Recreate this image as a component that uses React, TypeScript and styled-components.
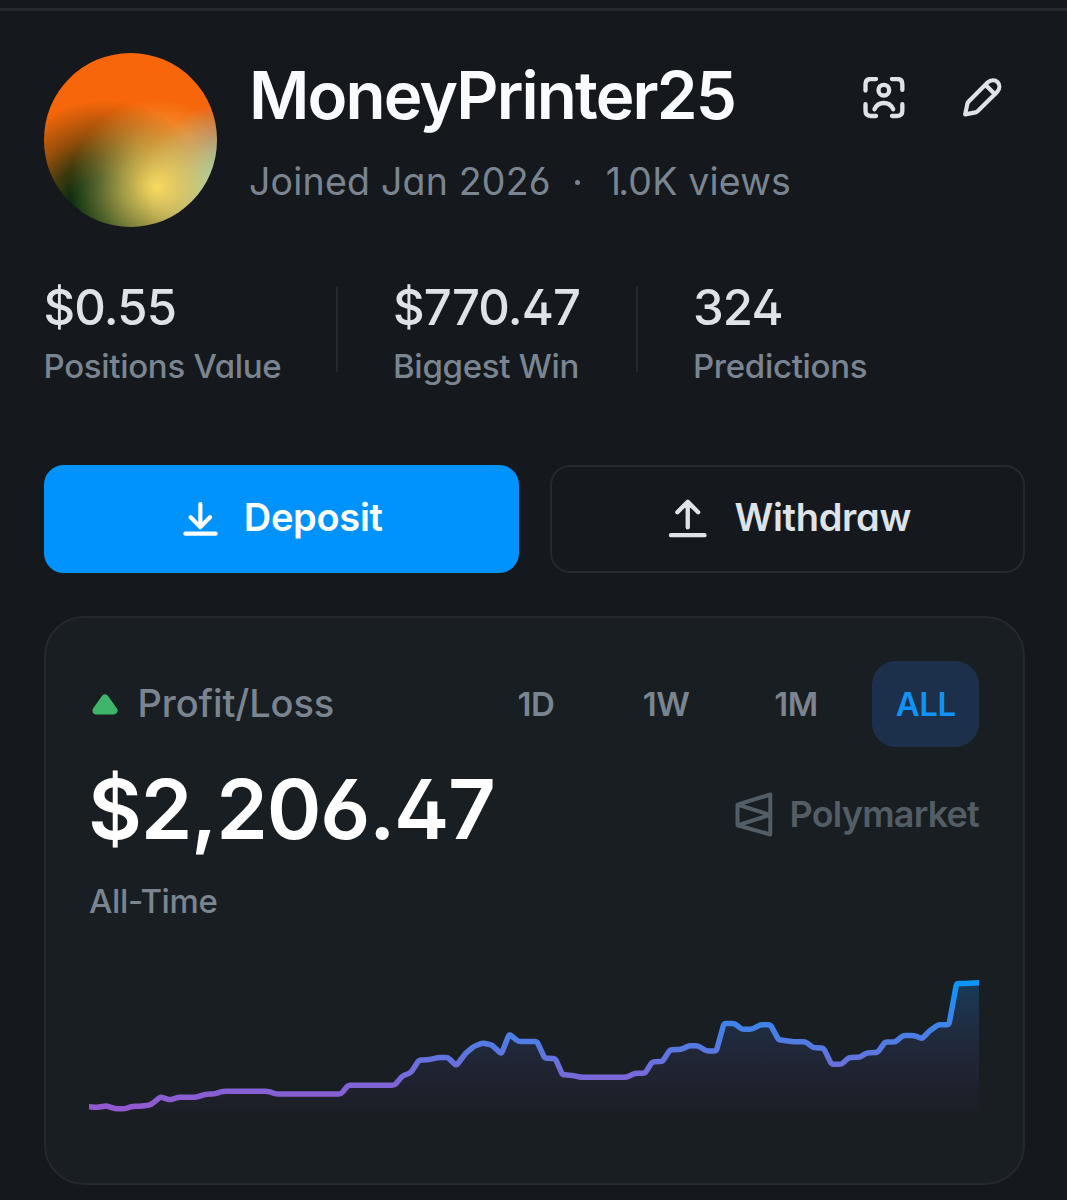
import React from "react";
import styled, { createGlobalStyle, css } from "styled-components";

const GlobalStyle = createGlobalStyle`
  *, *::before, *::after { box-sizing: border-box; }
  body {
    margin: 0;
    background: #15191d;
    font-family: Inter, "Liberation Sans", sans-serif;
    font-feature-settings: "cv11", "cv02", "cv03", "cv04";
    overflow: hidden;
  }
`;

const color = {
  line: "#25292d",
  muted: "#7a8591",
  text: "#dee3e9",
  blue: "#0093fd",
};

const Page = styled.main`
  display: flex;
  flex-direction: column;
  width: 1067px;
  height: 1200px;
  padding: 7.5px 42.5px 0 43.5px;
  overflow: hidden;
`;

const TopRule = styled.hr`
  width: 1067px;
  height: 3px;
  flex: none;
  margin: 0 0 0 -43.5px;
  border: 0;
  background: #25292d;
`;

const Header = styled.header`
  display: flex;
  align-items: flex-start;
  margin-top: 42px;
  height: 174px;
`;

const Avatar = styled.div`
  width: 173.5px;
  height: 174px;
  flex: none;
  border-radius: 50%;
  background:
    radial-gradient(circle at 65.5% 77%, #f8da5f 0, rgba(247, 217, 98, 0.88) 13px, rgba(240, 212, 100, 0.64) 36px, rgba(235, 205, 100, 0.34) 60px, rgba(235, 200, 100, 0) 88px),
    radial-gradient(circle at 110% 80%, #6fdcd0 0, rgba(115, 214, 205, 0.9) 28px, rgba(120, 185, 200, 0.52) 58px, rgba(127, 170, 190, 0) 92px),
    radial-gradient(circle at 35% 94%, #06300f 0, #0b2d10 38px, rgba(16, 46, 14, 0.8) 58px, rgba(30, 50, 10, 0.44) 82px, rgba(40, 50, 10, 0) 116px),
    #f7660a;
`;

const Identity = styled.div`
  flex: 1;
  padding: 13.5px 0 0 32px;
`;

const Name = styled.h1`
  margin: 0;
  color: #f9fbfe;
  font-size: 65.5px;
  font-weight: 620;
  line-height: 60px;
  letter-spacing: -1.85px;
  white-space: nowrap;
`;

const Meta = styled.div`
  display: flex;
  align-items: center;
  margin-top: 32.5px;
  color: ${color.muted};
  font-size: 37.5px;
  line-height: 46px;
  letter-spacing: 0.2px;
  white-space: nowrap;
`;

const MetaDot = styled.span`
  width: 5px;
  height: 5px;
  margin: 2px 25.5px 0 24.5px;
  border-radius: 50%;
  background: ${color.muted};
`;

const TightDigit = styled.span`
  letter-spacing: -2.8px;
`;

const Actions = styled.div`
  display: flex;
  gap: 56.5px;
  margin: 24px 22px 0 0;
  color: ${color.text};
`;

const Icon = styled.svg<{ $size: number }>`
  display: block;
  flex: none;
  width: ${(p) => p.$size}px;
  height: ${(p) => p.$size}px;
  fill: none;
  stroke: currentColor;
  stroke-linecap: round;
  stroke-linejoin: round;
`;

const Stats = styled.section`
  display: flex;
  height: 100px;
  margin-top: 59.5px;
`;

const Stat = styled.div<{ $width: number; $inset?: number }>`
  width: ${(p) => p.$width}px;
  padding-left: ${(p) => p.$inset ?? 0}px;
`;

const StatDivider = styled.div`
  width: 2px;
  height: 86px;
  background: ${color.line};
`;

const StatValue = styled.div`
  color: ${color.text};
  font-size: 49px;
  font-weight: 500;
  line-height: 43px;
  letter-spacing: -0.85px;
`;

const StatLabel = styled.div`
  margin-top: 17px;
  color: ${color.muted};
  font-size: 33px;
  font-weight: 500;
  line-height: 40px;
  letter-spacing: -0.3px;
  white-space: nowrap;
`;

const Buttons = styled.div`
  display: grid;
  grid-template-columns: 475px 475px;
  gap: 31.5px;
  margin-top: 78.5px;
`;

const Button = styled.button<{ $primary?: boolean; $gap: number }>`
  display: flex;
  align-items: center;
  justify-content: center;
  gap: ${(p) => p.$gap}px;
  height: 108px;
  padding: 0 0 1px 4px;
  border: 2px solid ${color.line};
  border-radius: 20px;
  background: transparent;
  color: ${color.text};
  font: inherit;
  font-feature-settings: inherit;
  font-size: 38px;
  font-weight: 600;
  letter-spacing: -0.3px;
  ${(p) =>
    p.$primary &&
    css`
      border-color: ${color.blue};
      background: ${color.blue};
      color: #fff;
    `}
`;

const ButtonText = styled.span`
  margin-top: -1.5px;
`;

const Card = styled.section`
  display: flex;
  flex-direction: column;
  height: 568.5px;
  margin-top: 43.5px;
  padding: 43px 43.5px 0 43.5px;
  border: 2px solid ${color.line};
  border-radius: 40px;
  background: #191e22;
`;

const CardHead = styled.div`
  display: flex;
  align-items: center;
  justify-content: space-between;
  height: 86px;
`;

const CardTitle = styled.div`
  display: flex;
  align-items: center;
  padding-bottom: 2px;
  color: ${color.muted};
  font-size: 38px;
  font-weight: 500;
  line-height: 46px;
  letter-spacing: -0.1px;
`;

const Trend = styled.svg`
  width: 26px;
  height: 22px;
  margin: 1px 19.5px 0 3px;
  fill: #3fb56b;
  stroke: #3fb56b;
  stroke-width: 8;
  stroke-linejoin: round;
`;

const Tabs = styled.div`
  display: flex;
`;

const Tab = styled.button<{ $active?: boolean; $width: number; $gap: number }>`
  width: ${(p) => p.$width}px;
  height: 86px;
  margin-left: ${(p) => p.$gap}px;
  padding: 0 0 0 1px;
  border: 0;
  border-radius: 24px;
  background: ${(p) => (p.$active ? "#1d304b" : "transparent")};
  color: ${(p) => (p.$active ? "#1193f5" : color.muted)};
  font: inherit;
  font-size: 33px;
  font-weight: 600;
  letter-spacing: -0.5px;
`;

const AmountRow = styled.div`
  display: flex;
  align-items: center;
  justify-content: space-between;
  height: 90px;
  margin-top: 17px;
`;

const Amount = styled.div`
  margin-left: -1px;
  color: #fff;
  font-size: 83px;
  font-weight: 600;
  line-height: 90px;
  letter-spacing: -1.3px;
`;

const Brand = styled.div`
  display: flex;
  align-items: center;
  gap: 16.5px;
  padding-top: 9px;
  color: #535d65;
  font-size: 36px;
  font-weight: 600;
  font-feature-settings: normal;
  letter-spacing: -0.8px;
`;

const BrandMark = styled.svg`
  width: 38px;
  height: 45px;
  margin-top: 1px;
  fill: none;
  stroke: currentColor;
  stroke-width: 4;
  stroke-linejoin: round;
`;

const Period = styled.div`
  margin-top: 26.5px;
  color: ${color.muted};
  font-size: 33px;
  font-weight: 500;
  line-height: 40px;
  letter-spacing: -0.35px;
`;

const Chart = styled.svg`
  display: block;
  width: 890px;
  height: 150px;
  margin-top: 49.5px;
`;

const series: [number, number][] = [
  [88, 1106.6], [97, 1107.5], [106.5, 1105.8], [115, 1108.7], [124.5, 1108.7], [133, 1106.3],
  [142, 1106.2], [151, 1104.7], [160.5, 1096.8], [169.5, 1100], [178, 1097.3], [196.5, 1097.2],
  [205, 1094.3], [214, 1094], [223, 1091.3], [267.5, 1091.3], [276.5, 1094], [341, 1094],
  [348, 1085.3], [394.5, 1085.3], [402.5, 1075.9], [411, 1072.6], [419, 1060], [429, 1059.6],
  [438, 1057.6], [448, 1057.6], [456.3, 1065.7], [465.5, 1053.5], [474, 1046.3], [482.7, 1043],
  [492, 1045], [501.3, 1054], [509.3, 1034], [518.5, 1041.6], [537, 1041.6], [544.8, 1058.3],
  [555.3, 1058.5], [562.5, 1074.7], [572, 1075.3], [581, 1077.3], [626.5, 1077.3], [635, 1073.3],
  [645, 1073.2], [652.3, 1061.7], [662.5, 1061.5], [670, 1049.7], [681, 1049.5], [689, 1045.7],
  [698, 1045.7], [706.5, 1051], [716.3, 1051], [724, 1023.5], [734.5, 1023.5], [742, 1029.3],
  [752, 1029.3], [760.5, 1024.8], [770.5, 1024.8], [778.5, 1039.7], [792, 1041.6], [805.5, 1041.8],
  [813.5, 1047.8], [823.5, 1048], [831.5, 1064.3], [841.5, 1064.3], [849, 1057.4], [859.5, 1057.3],
  [867, 1052.7], [877.5, 1052.6], [885, 1042.1], [895.5, 1042], [903, 1035.4], [914, 1035.4],
  [922, 1038.7], [929, 1031.5], [938, 1024.9], [949, 1024.6], [956.5, 983.7], [966.7, 983.3], [981, 982.6],
];

/** Joins the points with short rounded corners. */
function roundedPath(points: [number, number][], radius: number) {
  let d = `M${points[0][0]} ${points[0][1]}`;
  for (let i = 1; i < points.length - 1; i++) {
    const [px, py] = points[i - 1];
    const [x, y] = points[i];
    const [nx, ny] = points[i + 1];
    const a = Math.hypot(x - px, y - py);
    const b = Math.hypot(nx - x, ny - y);
    const ra = Math.min(radius, a / 2) / a;
    const rb = Math.min(radius, b / 2) / b;
    d += `L${(x + (px - x) * ra).toFixed(2)} ${(y + (py - y) * ra).toFixed(2)}`;
    d += `Q${x} ${y} ${(x + (nx - x) * rb).toFixed(2)} ${(y + (ny - y) * rb).toFixed(2)}`;
  }
  const [lx, ly] = points[points.length - 1];
  return `${d}L${lx} ${ly}`;
}

const linePath = roundedPath(series, 2.4);

const stats = [
  { value: "$0.55", label: "Positions Value", width: 292.5 },
  { value: "$770.47", label: "Biggest Win", width: 298, inset: 55 },
  { value: "324", label: "Predictions", width: 330, inset: 55 },
];

const tabs = [
  { label: "1D", width: 86, gap: 0 },
  { label: "1W", width: 96, gap: 39 },
  { label: "1M", width: 92, gap: 36 },
  { label: "ALL", width: 107.5, gap: 30, active: true },
];

export default function App() {
  return (
    <>
      <GlobalStyle />
      <Page>
        <TopRule />
        <Header>
          <Avatar />
          <Identity>
            <Name>MoneyPrinter25</Name>
            <Meta>
              <span>Joined Jan 2026</span>
              <MetaDot />
              <span>
                <TightDigit>1</TightDigit>.0K views
              </span>
            </Meta>
          </Identity>
          <Actions>
            <Icon $size={42} viewBox="69 80.500 126 126" strokeWidth={13}>
              <path d="M76.500 121V102Q76.500 86.500 92 86.500H108M156 86.500H172Q187 86.500 187 102V119M187 162V182Q187 197.500 172 197.500H156M108 197.500H92Q76.500 197.500 76.500 182V162" />
              <circle cx="131.500" cy="120" r="16" />
              <path d="M103.500 177C109 165 118 158.500 131.500 158.500S154 165 159.500 177" />
            </Icon>
            <Icon $size={41} viewBox="366 80 123 123" strokeWidth={12.5}>
              <path d="M375.500 192 382 160.500C382.700 157.500 384 155.500 386 153.500L443.500 96C452 88 465 87.500 472.500 95S480 115 472 124L413.500 182C411.500 184 409.500 185.200 406.500 186.200Z" />
              <path d="M437 104 464 131" />
            </Icon>
          </Actions>
        </Header>

        <Stats>
          {stats.map((s, i) => (
            <React.Fragment key={s.label}>
              {i > 0 && <StatDivider />}
              <Stat $width={s.width} $inset={s.inset}>
                <StatValue>{s.value}</StatValue>
                <StatLabel>{s.label}</StatLabel>
              </Stat>
            </React.Fragment>
          ))}
        </Stats>

        <Buttons>
          <Button $primary $gap={25.5}>
            <Icon $size={35} viewBox="460 151 105 105" strokeWidth={12.5}>
              <path d="M512 160V230M483 200 512 229 541 200M467 249H558" />
            </Icon>
            <ButtonText>Deposit</ButtonText>
          </Button>
          <Button $gap={27}>
            <Icon $size={39.5} viewBox="415 146.500 118 118" strokeWidth={13}>
              <path d="M474 158V234M443 189 474 158 505 189M424 257.500H524" />
            </Icon>
            <ButtonText>Withdraw</ButtonText>
          </Button>
        </Buttons>

        <Card>
          <CardHead>
            <CardTitle>
              <Trend viewBox="0 0 26 22">
                <path d="M13 5.500 21.500 17.500H4.500Z" />
              </Trend>
              Profit/Loss
            </CardTitle>
            <Tabs>
              {tabs.map((t) => (
                <Tab key={t.label} $width={t.width} $gap={t.gap} $active={t.active}>
                  {t.label}
                </Tab>
              ))}
            </Tabs>
          </CardHead>
          <AmountRow>
            <Amount>$2,206.47</Amount>
            <Brand>
              <BrandMark viewBox="735.500 791.500 38 45">
                <path d="M738 804.200 770.800 794V834L738 824.800ZM738 804.200 770.800 814.300 738 824.800" />
              </BrandMark>
              Polymarket
            </Brand>
          </AmountRow>
          <Period>All-Time</Period>
          <Chart viewBox="89 970 890 150">
            <defs>
              <linearGradient id="stroke" gradientUnits="userSpaceOnUse" x1="0" y1="982" x2="0" y2="1110">
                <stop offset="0" stopColor="#0c95f8" />
                <stop offset="0.33" stopColor="#3f83ea" />
                <stop offset="0.5" stopColor="#547ae2" />
                <stop offset="0.75" stopColor="#7a68d8" />
                <stop offset="1" stopColor="#9458cf" />
              </linearGradient>
              <linearGradient id="area" gradientUnits="userSpaceOnUse" x1="0" y1="982" x2="0" y2="1116">
                <stop offset="0" stopColor="#1580d8" stopOpacity="0.3" />
                <stop offset="0.4" stopColor="#4070d8" stopOpacity="0.15" />
                <stop offset="0.75" stopColor="#6a55c8" stopOpacity="0.075" />
                <stop offset="1" stopColor="#8040b0" stopOpacity="0.01" />
              </linearGradient>
            </defs>
            <path d={`${linePath}V1116H88Z`} fill="url(#area)" />
            <path d={linePath} fill="none" stroke="url(#stroke)" strokeWidth="5.500" strokeLinejoin="round" />
          </Chart>
        </Card>
      </Page>
    </>
  );
}
